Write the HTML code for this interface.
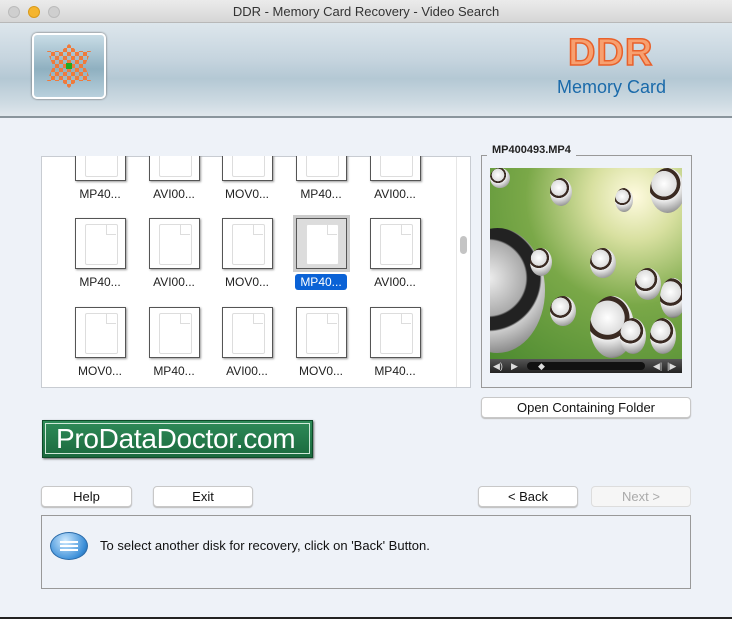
<!DOCTYPE html>
<html><head><style>
*{margin:0;padding:0;box-sizing:border-box}
body{width:732px;height:619px;overflow:hidden;background:#eef2f8;font-family:"Liberation Sans",sans-serif;position:relative}
.abs{position:absolute}
.title{left:0;top:0;width:732px;height:23px;background:linear-gradient(#ebebeb,#d6d6d6);border-bottom:1px solid #b8b8b8;text-align:center;font-size:13px;line-height:23px;color:#333}
.dot{top:6px;width:12px;height:12px;border-radius:50%}
.hdr{left:0;top:23px;width:732px;height:95px;background:linear-gradient(180deg,#dde6ec 0%,#c5d4de 40%,#b4c8d4 60%,#cddae2 85%,#e0e7ec 100%);border-bottom:2px solid #8a959c}
.icon{width:51px;height:51px;border:1px solid #555;background:#fff;box-shadow:1px 1px 2px #999}
.icon:after{content:"";position:absolute;left:9px;top:5px;width:31px;height:39px;border:1px solid #ddd;border-radius:2px;background:#fff}
.icon:before{content:"";position:absolute;left:30px;top:6px;width:9px;height:9px;border-left:1px solid #ddd;border-bottom:1px solid #ddd;z-index:1}
.lbl{font-size:12px;color:#222;width:80px;text-align:center}
.btn{height:21px;background:#fff;border:1px solid #c8c8c8;border-radius:4px;font-size:13px;text-align:center;line-height:19px;color:#111;box-shadow:0 1px 1px #bbb}
.ball{position:absolute;border-radius:50%;background:radial-gradient(circle at 40% 35%,#fff 0,#ddd 35%,#3a2a22 36%,#3a2a22 45%,#eee 46%,#999 80%,#322 100%)}
</style></head><body>
<div class="abs title">DDR - Memory Card Recovery - Video Search</div>
<div class="abs dot" style="left:8px;background:#cfcfcf;border:1px solid #bbb"></div>
<div class="abs dot" style="left:28px;background:#f5b52e;border:1px solid #d99a1a"></div>
<div class="abs dot" style="left:48px;background:#cfcfcf;border:1px solid #bbb"></div>
<div class="abs hdr"></div>
<div class="abs" style="left:32px;top:33px;width:74px;height:66px;border:2px solid #fff;border-radius:5px;background:linear-gradient(#c8dce6,#8fb0c0 55%,#b8d0dc);box-shadow:0 0 2px #555"></div>
<div class="abs" style="left:47px;top:44px;width:44px;height:44px;background:repeating-conic-gradient(#f07a3a 0 25%,transparent 0 50%) 0 0/8px 8px;clip-path:polygon(50% 0,68% 16%,100% 16%,86% 50%,100% 84%,68% 84%,50% 100%,32% 84%,0 84%,14% 50%,0 16%,32% 16%)"></div>
<div class="abs" style="left:66px;top:63px;width:6px;height:6px;background:#2a2"></div>
<div class="abs" style="left:568px;top:32px;font-size:38px;font-weight:bold;color:#f7a070;-webkit-text-stroke:1.5px #e8602a;letter-spacing:1px">DDR</div>
<div class="abs" style="left:557px;top:77px;font-size:18px;color:#1a6aaa">Memory Card</div>

<div class="abs" style="left:41px;top:156px;width:430px;height:232px;background:#fff;border:1px solid #c8ccd2;overflow:hidden">
<div class="abs" style="left:414px;top:0;width:1px;height:232px;background:#e6e6e6"></div>
<div class="abs" style="left:418px;top:79px;width:7px;height:18px;border-radius:4px;background:#c4c4c4"></div>
</div>
<div class="abs" style="left:41px;top:156px;width:415px;height:232px;overflow:hidden">
<div id="g"></div>
</div>
<script>
var cols=[34,108,181,255,329],rows=[-26,62,151],names=[["MP40...","AVI00...","MOV0...","MP40...","AVI00..."],["MP40...","AVI00...","MOV0...","MP40...","AVI00..."],["MOV0...","MP40...","AVI00...","MOV0...","MP40..."]],h="";
for(var r=0;r<3;r++)for(var c=0;c<5;c++){var x=cols[c],y=rows[r],sel=(r==1&&c==3);
h+='<div class="abs icon" style="left:'+x+'px;top:'+y+'px;'+(sel?'background:#dcdcdc;box-shadow:0 0 0 3px #ccc':'')+'"></div>';
h+='<div class="abs lbl" style="left:'+(x-15)+'px;top:'+(y+57)+'px">'+(sel?'<span style="background:#0a62d6;color:#fff;border-radius:3px;padding:1px 5px">'+names[r][c]+'</span>':names[r][c])+'</div>';}
document.getElementById('g').innerHTML=h;
</script>

<div class="abs" style="left:481px;top:155px;width:211px;height:233px;border:1px solid #999"></div>
<div class="abs" style="left:487px;top:144px;background:#eef2f8;padding:0 5px;font-size:11px;font-weight:bold;color:#222">MP400493.MP4</div>
<div class="abs" style="left:490px;top:168px;width:192px;height:191px;background:radial-gradient(circle at 75% 15%,#fffbe0 0,#d8e0a0 20%,#7aa848 50%,#4c8a30 100%);overflow:hidden">
<div class="abs" style="left:-40px;top:60px;width:95px;height:125px;border-radius:50%;background:radial-gradient(circle at 40% 40%,#eee,#aaa 40%,#222 42%,#222 55%,#ccc 57%,#555)"></div>
<div class="ball" style="left:100px;top:128px;width:44px;height:62px"></div>
<div class="ball" style="left:145px;top:100px;width:26px;height:32px"></div>
<div class="ball" style="left:60px;top:128px;width:26px;height:30px"></div>
<div class="ball" style="left:100px;top:80px;width:26px;height:30px"></div>
<div class="ball" style="left:160px;top:0;width:35px;height:45px"></div>
<div class="ball" style="left:60px;top:10px;width:22px;height:28px"></div>
<div class="ball" style="left:0;top:0;width:20px;height:20px"></div>
<div class="ball" style="left:130px;top:150px;width:26px;height:36px"></div>
<div class="ball" style="left:170px;top:110px;width:26px;height:40px"></div>
<div class="ball" style="left:40px;top:80px;width:22px;height:28px"></div>
<div class="ball" style="left:125px;top:20px;width:18px;height:24px"></div>
<div class="ball" style="left:160px;top:150px;width:26px;height:36px"></div>
</div>
<div class="abs" style="left:490px;top:359px;width:192px;height:14px;background:linear-gradient(#555,#222);color:#ddd;font-size:9px;line-height:14px">
<span class="abs" style="left:3px">◀)</span><span class="abs" style="left:21px">▶</span>
<div class="abs" style="left:37px;top:3px;width:118px;height:8px;border-radius:4px;background:#111"></div>
<span class="abs" style="left:48px;top:0">◆</span>
<span class="abs" style="left:163px">◀|</span><span class="abs" style="left:177px">|▶</span></div>
<div class="abs btn" style="left:481px;top:397px;width:210px">Open Containing Folder</div>

<div class="abs" style="left:42px;top:420px;width:271px;height:38px;background:linear-gradient(#2e8a58,#1b6a3e);border:1px solid #0d4a28;box-shadow:1px 1px 2px #666"><div style="margin:2px;border:1.5px solid #cfe8d8;height:31px;color:#fff;font-family:'Liberation Sans Narrow','Liberation Sans',sans-serif;font-size:28px;line-height:29px;padding-left:10px;letter-spacing:-0.3px">ProDataDoctor.com</div></div>

<div class="abs btn" style="left:41px;top:486px;width:91px">Help</div>
<div class="abs btn" style="left:153px;top:486px;width:100px">Exit</div>
<div class="abs btn" style="left:478px;top:486px;width:100px">&lt; Back</div>
<div class="abs btn" style="left:591px;top:486px;width:100px;color:#aaa;box-shadow:none;border-color:#ddd;background:#f6f6f6">Next &gt;</div>

<div class="abs" style="left:41px;top:515px;width:650px;height:74px;border:1px solid #999;background:#eef2f8"></div>
<div class="abs" style="left:50px;top:532px;width:38px;height:28px;border-radius:50%;background:radial-gradient(circle at 40% 30%,#cfeaff,#3a8ed8 70%,#1a5a98);border:1px solid #2a6aa8"></div>
<div class="abs" style="left:60px;top:541px;width:18px;height:1.5px;background:#fff;box-shadow:0 4px 0 #fff,0 8px 0 #fff"></div>
<div class="abs" style="left:100px;top:538px;font-size:13px;color:#111">To select another disk for recovery, click on 'Back' Button.</div>
<div class="abs" style="left:0;top:617px;width:732px;height:2px;background:#222"></div>
</body></html>
